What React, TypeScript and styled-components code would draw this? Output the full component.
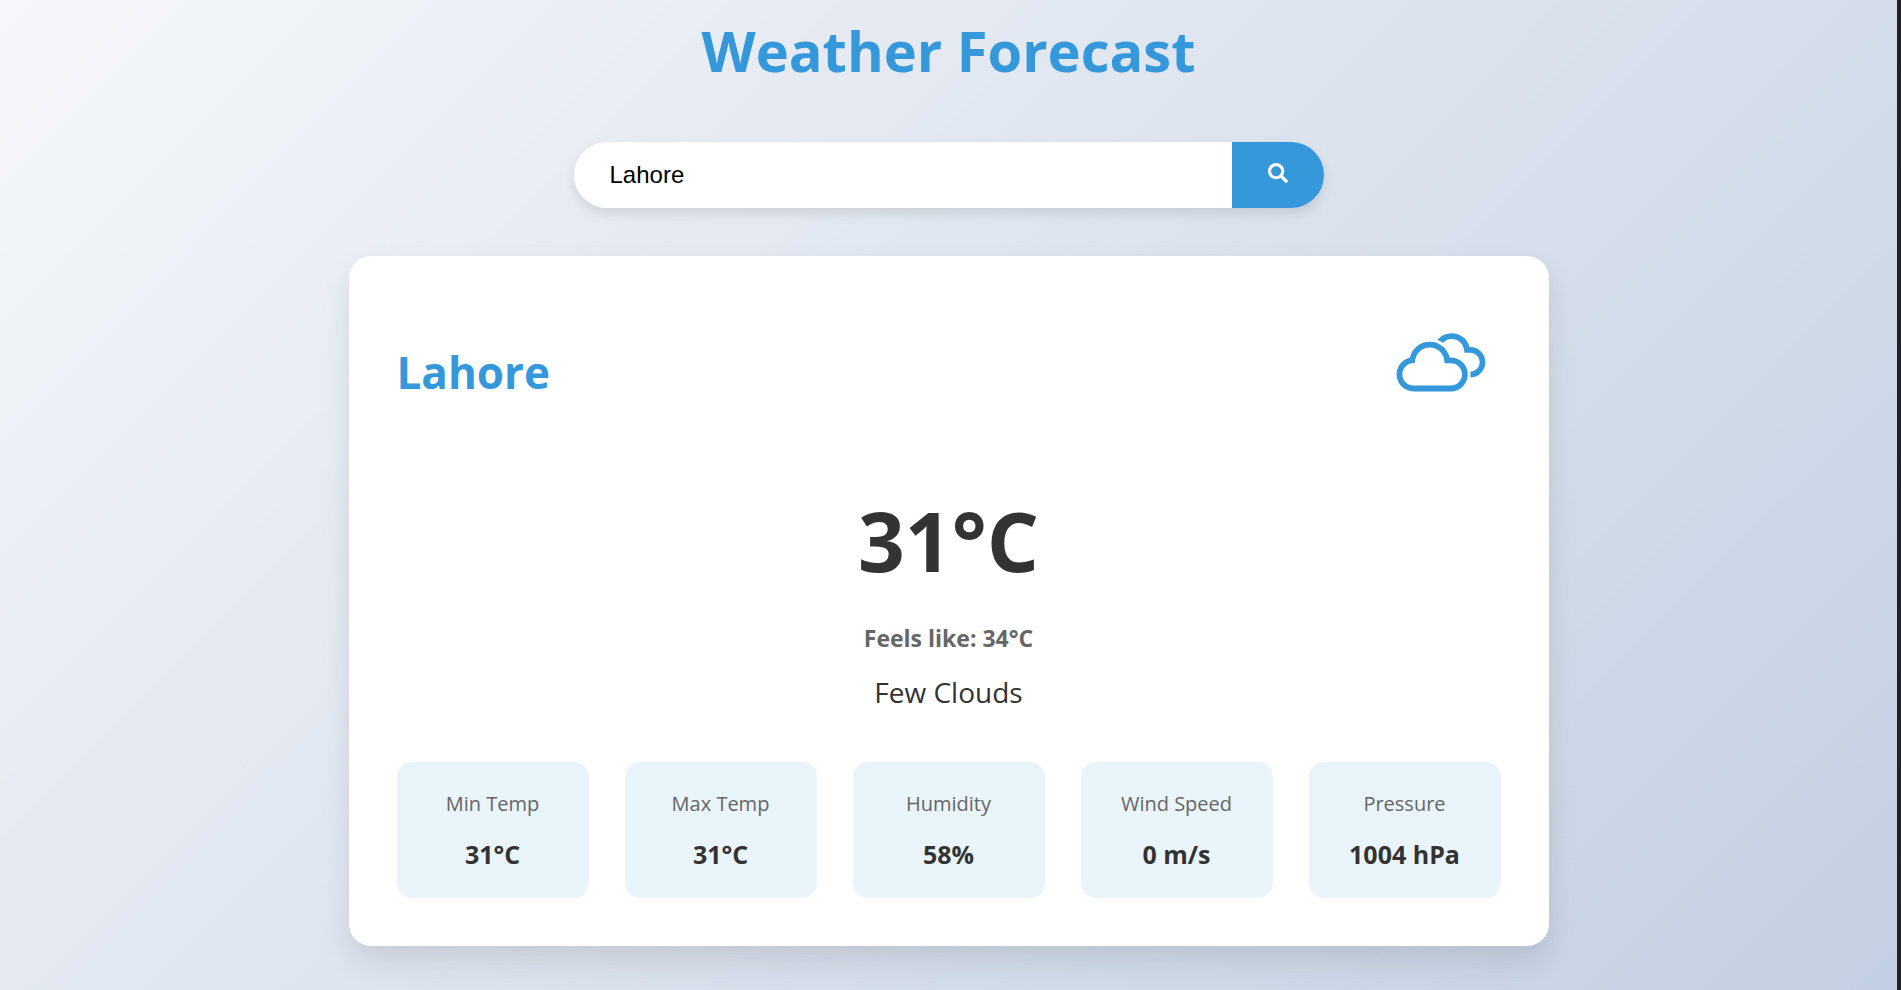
import React, { useState } from "react";
import styled, { createGlobalStyle } from "styled-components";
import { WiCloudy } from "react-icons/wi";
import { FaSearch } from "react-icons/fa";

const GlobalStyle = createGlobalStyle`
  * { box-sizing: border-box; }
  body {
    margin: 0;
    color: #333;
    font-family: "Segoe UI", "Open Sans", sans-serif;
  }
`;

const Page = styled.main`
  min-height: 100vh;
  padding: 0 24px 44px;
  display: flex;
  flex-direction: column;
  align-items: center;
  background: linear-gradient(135deg, #f5f7fa 0%, #c3cfe2 100%);
  border-right: 4px solid #222;
`;

const Title = styled.h1`
  margin: 10px 0 52px;
  color: #3498db;
  font-size: 56px;
  line-height: 80px;
  font-weight: 700;
`;

const SearchForm = styled.form`
  display: flex;
  width: 100%;
  max-width: 750px;
  height: 66px;
  margin-bottom: 48px;
  border-radius: 33px;
  overflow: hidden;
  box-shadow: 0 6px 12px rgba(0, 0, 0, 0.1);
`;

const SearchInput = styled.input`
  flex: 1;
  min-width: 0;
  padding: 0 36px;
  border: none;
  outline: none;
  background: #fff;
  color: #000;
  font: 24px "Liberation Sans", Arial, sans-serif;
`;

const SearchButton = styled.button`
  display: flex;
  align-items: center;
  justify-content: center;
  width: 92px;
  padding: 0 0 4px;
  border: none;
  background: #3498db;
  color: #fff;
  font-size: 20px;
  cursor: pointer;
`;

const Card = styled.section`
  width: 100%;
  max-width: 1200px;
  padding: 48px;
  border-radius: 22px;
  background: #fff;
  box-shadow: 0 15px 30px rgba(0, 0, 0, 0.1);
`;

const CardHeader = styled.header`
  display: flex;
  align-items: flex-start;
  justify-content: space-between;
  margin-bottom: 60px;
  color: #3498db;
`;

const City = styled.h2`
  margin: 36px 0 0;
  font-size: 44px;
  line-height: 64px;
  font-weight: 700;
`;

const Current = styled.div`
  display: flex;
  flex-direction: column;
  align-items: center;
  margin-bottom: 50px;
`;

const Temperature = styled.div`
  margin-bottom: 24px;
  font-size: 82px;
  line-height: 112px;
  font-weight: 700;
`;

const FeelsLike = styled.div`
  margin-bottom: 16px;
  color: #666;
  font-size: 23px;
  line-height: 36px;
  font-weight: 700;
`;

const Description = styled.div`
  font-size: 28px;
  line-height: 40px;
`;

const Details = styled.dl`
  display: grid;
  grid-template-columns: repeat(auto-fit, minmax(180px, 1fr));
  gap: 36px;
  margin: 0;
`;

const Detail = styled.div`
  padding: 24px 12px 26px;
  border-radius: 15px;
  background: #e9f4fb;
  text-align: center;
`;

const DetailLabel = styled.dt`
  margin-bottom: 14px;
  color: #666;
  font-size: 20px;
  line-height: 36px;
`;

const DetailValue = styled.dd`
  margin: 0;
  font-size: 25px;
  line-height: 36px;
  font-weight: 700;
`;

const details = [
  { label: "Min Temp", value: "31°C" },
  { label: "Max Temp", value: "31°C" },
  { label: "Humidity", value: "58%" },
  { label: "Wind Speed", value: "0 m/s" },
  { label: "Pressure", value: "1004 hPa" },
];

export default function App() {
  const [query, setQuery] = useState("Lahore");

  return (
    <>
      <GlobalStyle />
      <Page>
        <Title>Weather Forecast</Title>
        <SearchForm role="search" onSubmit={(e: React.FormEvent) => e.preventDefault()}>
          <SearchInput
            type="text"
            aria-label="City"
            value={query}
            onChange={(e) => setQuery(e.target.value)}
          />
          <SearchButton type="submit" aria-label="Search">
            <FaSearch />
          </SearchButton>
        </SearchForm>
        <Card>
          <CardHeader>
            <City>Lahore</City>
            <WiCloudy size={120} aria-hidden />
          </CardHeader>
          <Current>
            <Temperature>31°C</Temperature>
            <FeelsLike>Feels like: 34°C</FeelsLike>
            <Description>Few Clouds</Description>
          </Current>
          <Details>
            {details.map(({ label, value }) => (
              <Detail key={label}>
                <DetailLabel>{label}</DetailLabel>
                <DetailValue>{value}</DetailValue>
              </Detail>
            ))}
          </Details>
        </Card>
      </Page>
    </>
  );
}
